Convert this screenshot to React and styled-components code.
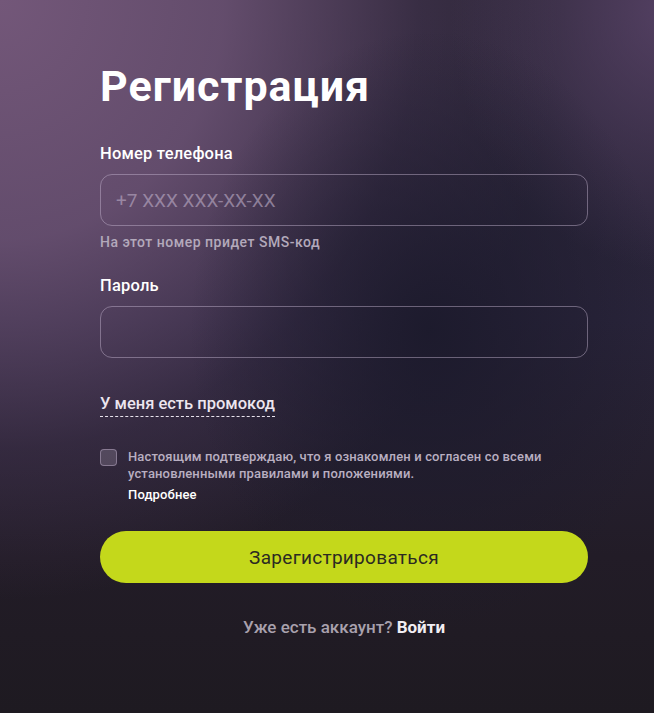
import React from "react";
import styled, { createGlobalStyle } from "styled-components";

const Global = createGlobalStyle`
  html, body { margin: 0; padding: 0; height: 100%; }
  body { font-family: Roboto, "Noto Sans", sans-serif; background: #1d1a22; }
  #root { min-height: 100%; }
  * { box-sizing: border-box; }
`;

const Page = styled.div`
  width: 654px;
  height: 713px;
  overflow: hidden;
  background:
    radial-gradient(ellipse 240px 300px at 430px 330px, rgba(28,26,44,0.95), rgba(28,26,44,0) 100%),
    radial-gradient(ellipse 220px 260px at 670px 10px, rgba(96,72,112,0.75), rgba(96,72,112,0) 100%),
    radial-gradient(ellipse 560px 600px at 0px 0px, #735779 0%, rgba(113,86,121,0.8) 40%, rgba(80,60,92,0.35) 75%, rgba(60,45,70,0) 100%),
    linear-gradient(180deg, #2c2637 0%, #29243a 45%, #221c27 78%, #1e1a21 100%);
  display: flex;
  padding-left: 100px;
`;

const Form = styled.form`
  width: 488px;
  padding-top: 58px;
  display: flex;
  flex-direction: column;
`;

const Title = styled.h1`
  margin: 0 0 30px;
  font-size: 43px;
  line-height: 56px;
  font-weight: 700;
  color: #fff;
  letter-spacing: 1px;
`;

const Label = styled.label`
  font-size: 16.5px;
  line-height: 20px;
  font-weight: 500;
  color: #fff;
  letter-spacing: 0.2px;
  margin-bottom: 10px;
`;

const Input = styled.input`
  height: 52px;
  width: 100%;
  border-radius: 12px;
  border: 1px solid rgba(200, 185, 210, 0.45);
  background: transparent;
  padding: 0 15px;
  font-family: inherit;
  font-size: 19px;
  color: #fff;
  outline: none;
  &::placeholder { color: rgba(190, 175, 200, 0.6); }
`;

const Hint = styled.div`
  margin-top: 8px;
  font-size: 14px;
  line-height: 16px;
  letter-spacing: 0.5px;
  color: #b3a9bb;
  font-weight: 500;
`;

const Field = styled.div`
  display: flex;
  flex-direction: column;
  margin-bottom: ${(p) => p.$mb}px;
`;

const Promo = styled.span`
  align-self: flex-start;
  font-size: 16.5px;
  line-height: 20px;
  font-weight: 500;
  color: #ece6ef;
  border-bottom: 1px dashed #e8e2ec;
  padding-bottom: 2px;
  margin-top: 36px;
`;

const AgreeRow = styled.div`
  display: flex;
  gap: 11px;
  margin-top: 31px;
`;

const Box = styled.span`
  flex: none;
  width: 17px;
  height: 17px;
  margin-top: 1px;
  border-radius: 4px;
  border: 1px solid rgba(200, 185, 210, 0.45);
  background: rgba(200, 185, 210, 0.22);
`;

const AgreeText = styled.div`
  font-size: 13px;
  line-height: 17px;
  letter-spacing: 0.15px;
  color: #b9afc1;
  font-weight: 500;
`;

const More = styled.div`
  margin-top: 4px;
  color: #fff;
  font-weight: 500;
`;

const Submit = styled.button`
  margin-top: 28px;
  height: 52px;
  width: 100%;
  border: none;
  border-radius: 26px;
  background: #c4d81b;
  color: #2b2a22;
  font-family: inherit;
  font-size: 19px;
  letter-spacing: 0.3px;
  font-weight: 400;
`;

const Footer = styled.div`
  margin-top: 34px;
  text-align: center;
  font-size: 17px;
  line-height: 20px;
  font-weight: 500;
  color: #a9a1ad;
  & b { color: #f1eef3; font-weight: 700; }
`;

export default function App() {
  return (
    <>
      <Global />
      <Page>
        <Form onSubmit={(e) => e.preventDefault()}>
          <Title>Регистрация</Title>
          <Field $mb={26}>
            <Label>Номер телефона</Label>
            <Input placeholder="+7 XXX XXX-XX-XX" />
            <Hint>На этот номер придет SMS-код</Hint>
          </Field>
          <Field $mb={0}>
            <Label>Пароль</Label>
            <Input type="password" />
          </Field>
          <Promo>У меня есть промокод</Promo>
          <AgreeRow>
            <Box />
            <AgreeText>
              Настоящим подтверждаю, что я ознакомлен и согласен со всеми
              <br />
              установленными правилами и положениями.
              <More>Подробнее</More>
            </AgreeText>
          </AgreeRow>
          <Submit type="submit">Зарегистрироваться</Submit>
          <Footer>
            Уже есть аккаунт? <b>Войти</b>
          </Footer>
        </Form>
      </Page>
    </>
  );
}
